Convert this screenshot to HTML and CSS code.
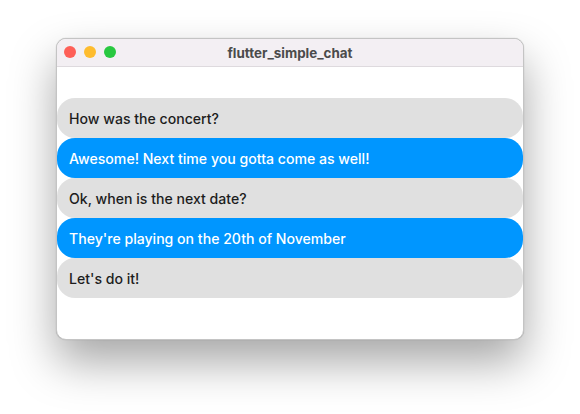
FILE: index.html
```html
<!DOCTYPE html>
<html lang="en">
<head>
    <meta charset="UTF-8">
    <meta name="viewport" content="width=device-width, initial-scale=1.0">
    <title>flutter_simple_chat</title>
    <link rel="stylesheet" href="styles.css">
</head>
<body>
    <div class="window">
        <div class="titlebar">
            <div class="lights">
                <span class="light red"></span>
                <span class="light yellow"></span>
                <span class="light green"></span>
            </div>
            <div class="title">flutter_simple_chat</div>
        </div>
        <div class="chat">
            <div class="bubble other">How was the concert?</div>
            <div class="bubble me">Awesome! Next time you gotta come as well!</div>
            <div class="bubble other">Ok, when is the next date?</div>
            <div class="bubble me">They're playing on the 20th of November</div>
            <div class="bubble other">Let's do it!</div>
        </div>
    </div>
</body>
</html>
```

FILE: styles.css
```css
body {
    margin: 0;
    padding: 38px 0 0 56px;
    background-color: #ffffff;
    font-family: Inter, "Noto Sans", sans-serif;
    width: 580px;
    height: 414px;
    box-sizing: border-box;
    overflow: hidden;
}
.window {
    width: 468px;
    height: 302px;
    background: white;
    border-radius: 10px;
    border: 1px solid #c4c4c4;
    box-sizing: border-box;
    overflow: hidden;
    box-shadow: 0 22px 45px rgba(0, 0, 0, 0.35), 0 0 1px rgba(0, 0, 0, 0.3);
}
.titlebar {
    height: 28px;
    background-color: #f3eff3;
    border-bottom: 1px solid #dedade;
    box-sizing: border-box;
    position: relative;
    display: flex;
    align-items: center;
    justify-content: center;
}
.lights {
    position: absolute;
    left: 7px;
    top: 7px;
    display: flex;
    gap: 8px;
}
.light {
    width: 12px;
    height: 12px;
    border-radius: 50%;
}
.red { background: #fe5f57; }
.yellow { background: #febc2e; }
.green { background: #28c840; }
.title {
    font-size: 13.4px;
    font-weight: 700;
    color: #4b4b4b;
}
.chat {
    padding-top: 31px;
    display: flex;
    flex-direction: column;
}
.bubble {
    height: 40px;
    display: flex;
    align-items: center;
    padding-left: 12px;
    border-radius: 18px;
    font-size: 14.1px;
    font-weight: 500;
}
.other {
    background-color: #e0e0e0;
    color: #1d1d1d;
}
.me {
    background-color: #0096ff;
    color: #ffffff;
}
```
